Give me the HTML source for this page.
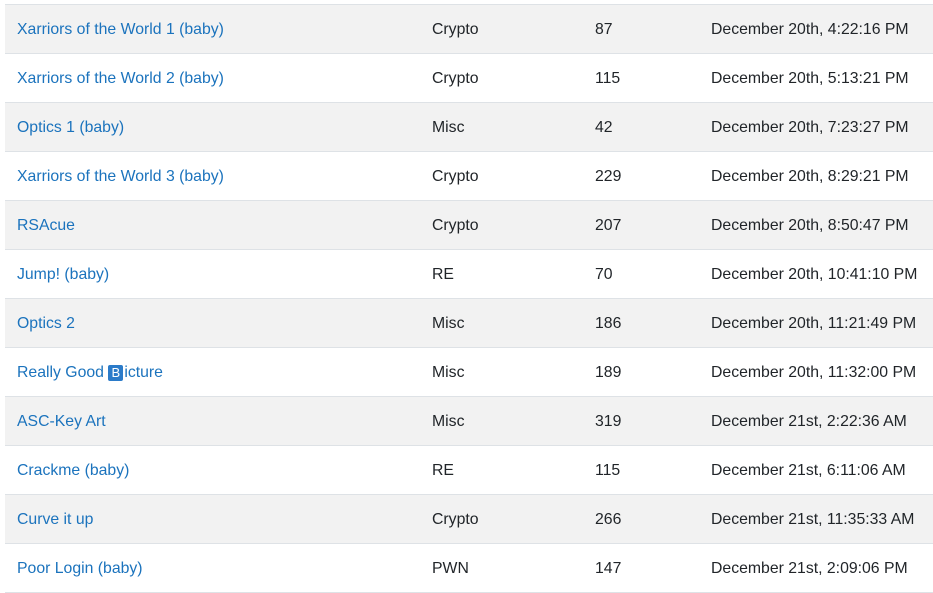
<!DOCTYPE html>
<html><head><style>
body{margin:0;background:#fff;font-family:"Liberation Sans",sans-serif;font-size:15.8px;color:#212529;}
table{position:absolute;left:5px;top:4px;width:928px;border-collapse:collapse;}
td{height:49px;border-top:1px solid #dee2e6;padding:2px 0 0 0;box-sizing:border-box;vertical-align:middle;white-space:nowrap;}
tr:last-child td{border-bottom:1px solid #dee2e6;}
tr:nth-child(odd) td{background:#f2f2f2;}
td.a{padding-left:12px;width:427px;}
td.b{width:163px;}
td.c{width:116px;}
a{color:#1b73bd;text-decoration:none;}
.bb{display:inline-block;background:#2b7bc9;color:#fff;font-size:13px;line-height:16px;width:15px;text-align:center;border-radius:2px;margin:0 1px 0 0;}
</style></head><body>
<table>
<tr><td class="a"><a>Xarriors of the World 1 (baby)</a></td><td class="b">Crypto</td><td class="c">87</td><td>December 20th, 4:22:16 PM</td></tr>
<tr><td class="a"><a>Xarriors of the World 2 (baby)</a></td><td class="b">Crypto</td><td class="c">115</td><td>December 20th, 5:13:21 PM</td></tr>
<tr><td class="a"><a>Optics 1 (baby)</a></td><td class="b">Misc</td><td class="c">42</td><td>December 20th, 7:23:27 PM</td></tr>
<tr><td class="a"><a>Xarriors of the World 3 (baby)</a></td><td class="b">Crypto</td><td class="c">229</td><td>December 20th, 8:29:21 PM</td></tr>
<tr><td class="a"><a>RSAcue</a></td><td class="b">Crypto</td><td class="c">207</td><td>December 20th, 8:50:47 PM</td></tr>
<tr><td class="a"><a>Jump! (baby)</a></td><td class="b">RE</td><td class="c">70</td><td>December 20th, 10:41:10 PM</td></tr>
<tr><td class="a"><a>Optics 2</a></td><td class="b">Misc</td><td class="c">186</td><td>December 20th, 11:21:49 PM</td></tr>
<tr><td class="a"><a>Really Good <span class="bb">B</span>icture</a></td><td class="b">Misc</td><td class="c">189</td><td>December 20th, 11:32:00 PM</td></tr>
<tr><td class="a"><a>ASC-Key Art</a></td><td class="b">Misc</td><td class="c">319</td><td>December 21st, 2:22:36 AM</td></tr>
<tr><td class="a"><a>Crackme (baby)</a></td><td class="b">RE</td><td class="c">115</td><td>December 21st, 6:11:06 AM</td></tr>
<tr><td class="a"><a>Curve it up</a></td><td class="b">Crypto</td><td class="c">266</td><td>December 21st, 11:35:33 AM</td></tr>
<tr><td class="a"><a>Poor Login (baby)</a></td><td class="b">PWN</td><td class="c">147</td><td>December 21st, 2:09:06 PM</td></tr>
</table>
</body></html>
